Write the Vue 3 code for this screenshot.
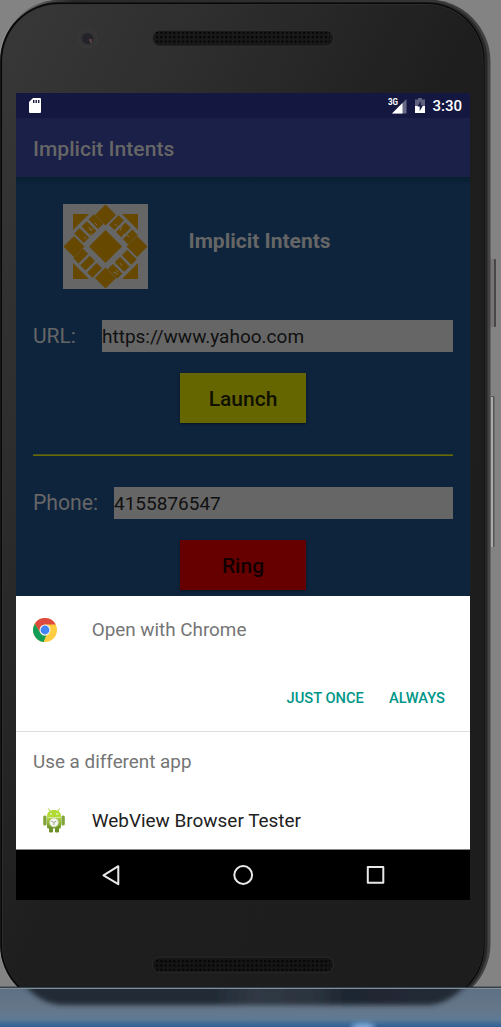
<script setup>
const tiles = [
  [16.6, 24.2], [23.8, 17.2], [30.9, 10.3],
]
</script>

<template>
  <main class="desktop">
    <svg class="hardware" viewBox="0 0 501 1027" aria-hidden="true">
      <defs>
        <linearGradient id="body" x1="0" y1="0" x2="1" y2="1">
          <stop offset="0" stop-color="#383838" />
          <stop offset=".22" stop-color="#2e2e2e" />
          <stop offset=".5" stop-color="#1e1e1e" />
          <stop offset="1" stop-color="#1d1d1e" />
        </linearGradient>
        <linearGradient id="rim" x1="0" y1="0" x2="1" y2="0">
          <stop offset="0" stop-color="#999" />
          <stop offset=".05" stop-color="#6e6e6e" />
          <stop offset=".15" stop-color="#282828" />
          <stop offset=".85" stop-color="#333" />
          <stop offset="1" stop-color="#454344" />
        </linearGradient>
        <linearGradient id="dock" x1="0" y1="0" x2="0" y2="1">
          <stop offset="0" stop-color="#5d7085" />
          <stop offset=".5" stop-color="#657688" />
          <stop offset=".8" stop-color="#5f7a94" />
          <stop offset="1" stop-color="#2d6096" />
        </linearGradient>
        <linearGradient id="reflection" x1="0" y1="0" x2="1" y2="0">
          <stop offset="0" stop-color="#202a35" />
          <stop offset=".42" stop-color="#212a35" />
          <stop offset=".52" stop-color="#303944" />
          <stop offset=".65" stop-color="#2b343f" />
          <stop offset=".72" stop-color="#1f2732" />
          <stop offset="1" stop-color="#222a36" />
        </linearGradient>
        <pattern id="holes" x="155" y="0" width="4.33" height="4.4" patternUnits="userSpaceOnUse">
          <rect width="2" height="2" x="1" y="1" fill="#020202" />
        </pattern>
        <filter id="soft" x="-10%" y="-50%" width="120%" height="200%">
          <feGaussianBlur stdDeviation="2.6" />
        </filter>
        <clipPath id="above"><rect width="501" height="987" /></clipPath>
        <clipPath id="below"><rect y="989" width="501" height="38" /></clipPath>
      </defs>
      <rect width="501" height="1027" fill="#838383" />
      <g clip-path="url(#above)">
        <rect x="490" y="259" width="6" height="68" rx="1" fill="#484648" />
        <rect x="490" y="259" width="4" height="68" fill="#777576" />
        <rect x="491" y="396" width="3.5" height="151" rx="1" fill="#555" />
        <rect x="491" y="397" width="2" height="150" fill="#aaa" />
        <rect x="-1" y="-.5" width="491.5" height="1006" rx="62" fill="url(#rim)" />
        <rect x="0" y="2" width="487.5" height="1002" rx="59" fill="#272728" />
        <rect x=".5" y="2.5" width="484" height="1001" rx="58" fill="#080808" />
        <rect x="2" y="4" width="481.5" height="998" rx="57" fill="#303030" />
        <rect x="2.7" y="4.7" width="480.3" height="997" rx="56" fill="url(#body)" />
      </g>
      <circle cx="87.5" cy="38.5" r="9.5" fill="#343434" stroke="#3c3939" />
      <circle cx="87.7" cy="38.5" r="5.5" fill="#242329" />
      <path d="M89 40h3M90 42h2" stroke="#8a5960" stroke-width="1" />
      <rect x="152.5" y="30.5" width="181" height="15.5" rx="7.7" fill="#191919" stroke="#303030" stroke-width=".7" />
      <rect x="156" y="31.7" width="174" height="13" fill="url(#holes)" />
      <rect x="152.5" y="957.2" width="181" height="15" rx="7.5" fill="#151515" stroke="#303030" stroke-width=".7" />
      <rect x="156" y="958.4" width="174" height="13" fill="url(#holes)" />
      <rect y="987" width="501" height="40" fill="url(#dock)" />
      <g clip-path="url(#below)">
        <path d="M21 980H470Q451 1005 426 1005H65Q38 1005 21 980Z" fill="url(#reflection)" filter="url(#soft)" />
        <ellipse cx="363" cy="1027" rx="12" ry="4" fill="#82addc" filter="url(#soft)" />
      </g>
      <path d="M0 987.2H501" stroke="#151e27" stroke-width="1" />
      <path d="M0 988.4H501" stroke="#87939b" stroke-width="1" />
    </svg>

    <section class="screen">
      <header class="status">
        <svg class="sd" viewBox="0 0 12 15"><path d="M4 0H11Q12 0 12 1V14Q12 15 11 15H1Q0 15 0 14V4Z" fill="#fff" /><path d="M4.700 2V5M7.200 2V5M9.700 2V5" stroke="#16193f" stroke-width="1.400" /></svg>
        <svg class="signal" viewBox="0 0 19 16">
          <path d="M18.500 1V15.500H4Z" fill="#686a86" /><path d="M14.500 5V15.500H4Z" fill="#fff" />
          <text x="0" y="7" fill="#fff" font-size="8.200" font-weight="700" textLength="10" lengthAdjust="spacingAndGlyphs">3G</text>
        </svg>
        <svg class="battery" viewBox="0 0 10 15"><path d="M3 0H7V1.500H10V8H0V1.500H3Z" fill="#5f617d" /><path d="M0 8H10V15H0Z" fill="#fff" /><path d="M5.700 3 2.500 8.600H4.700V13L8 7.400H5.700Z" fill="#16193f" /></svg>
        <span class="clock">3:30</span>
      </header>
      <div class="appbar"><span class="apptitle">Implicit Intents</span></div>

      <div class="content">
        <div class="hero">
          <svg class="logo" viewBox="0 0 85 85">
            <rect width="85" height="85" fill="#666" />
            <g fill="#664800">
              <path d="M42.500 26 59 42.500 42.500 59 26 42.500Z" />
              <path d="M42.500 .5 53 11 42.500 21.500 32 11Z M42.500 63.500 53 74 42.500 84.500 32 74Z M.5 42.500 11 32 21.500 42.500 11 53Z M63.500 42.500 74 32 84.500 42.500 74 53Z" />
              <path d="M10 10H26L10 26Z M59 10H75V26Z M10 59V75H26Z M75 59V75H59Z" />
              <g v-for="angle in [0, 90, 180, 270]" :key="angle" :transform="`rotate(${angle} 42.5 42.5)`">
                <path v-for="([x, y], i) in tiles" :key="i" :d="`M${x} ${y}l9.500 9.500-5.300 5.300-9.500-9.500Z`" />
              </g>
            </g>
            <path d="m26 23 2 4 2-3m-3 5 2 2m3-12 2 2m-13 12 2 2M52 20l2 2m5 0-2 5m4 3-1 3m4-2 2 2M50 68l5 2m2-11 2 3m-6 4 2 2" fill="none" stroke="#777166" stroke-width=".8" />
          </svg>
          <span class="herotitle">Implicit Intents</span>
        </div>
        <div class="field url"><span class="label"><span>URL:</span></span><span class="input"><span class="val1">https://www.yahoo.com</span></span></div>
        <div class="button launch"><span>Launch</span></div>
        <div class="rule"></div>
        <div class="field phone"><span class="label"><span>Phone:</span></span><span class="input"><span class="val2">4155876547</span></span></div>
        <div class="button ring"><span>Ring</span></div>
      </div>

      <div class="sheet">
        <div class="row chrome">
          <svg class="chromeicon" viewBox="0 0 24 24">
            <circle cx="12" cy="12" r="12" fill="#ffcd40" />
            <path d="M12 6.500H22.700A12 12 0 0 0 1.800 5.700L7.200 14.700Z" fill="#dd4b3e" />
            <path d="M1.800 5.700 7.200 14.700A5.500 5.500 0 0 0 13.500 17.300L10.800 24A12 12 0 0 1 1.800 5.700Z" fill="#109d58" />
            <path d="m16.700 14.700-4.800 9.200H10.700L13.500 17Z" fill="#ffcd40" />
            <circle cx="12" cy="12" r="5.500" fill="#f4f4f4" /><circle cx="12" cy="12" r="4.400" fill="#4285f4" />
          </svg>
          <span class="opentext">Open with Chrome</span>
        </div>
        <div class="actions"><span class="once">JUST ONCE</span><span class="always">ALWAYS</span></div>
        <div class="different"><span>Use a different app</span></div>
        <div class="row webview">
          <svg class="android" viewBox="0 0 22 25">
            <defs><linearGradient id="green" x2="0" y2="1"><stop stop-color="#add43c" /><stop offset="1" stop-color="#70942a" /></linearGradient></defs>
            <path d="M7 3 5.500.5M15 3 16.500.5" stroke="#a5c83c" />
            <path d="M4 9C4 4 6.500 2 11 2s7 2 7 7Z" fill="#b0db35" />
            <path d="M4 9.500H18V19Q18 20.500 16.500 20.500H5.500Q4 20.500 4 19Z" fill="url(#green)" />
            <rect x=".2" y="7.500" width="3.400" height="10" rx="1.500" fill="#82a43a" /><rect x="18.400" y="7.500" width="3.400" height="10" rx="1.500" fill="#82a43a" />
            <rect x="6" y="19.500" width="4" height="5" rx="1.300" fill="#6d922a" /><rect x="12" y="19.500" width="4" height="5" rx="1.300" fill="#6d922a" />
            <circle cx="8" cy="6" r=".8" fill="#fff" /><circle cx="14" cy="6" r=".8" fill="#fff" />
            <circle cx="11" cy="14.500" r="4.500" fill="#f5f6ed" stroke="#b6c296" stroke-width=".6" />
            <path d="m8.300 13 2.700 1.500 2.300-1.500M11 14.500V17" fill="none" stroke="#91998b" stroke-width=".9" />
          </svg>
          <span class="webtext">WebView Browser Tester</span>
        </div>
      </div>

      <nav class="nav">
        <svg viewBox="0 0 454 50" fill="none" stroke="#e8e8e8" stroke-width="2" stroke-linejoin="round">
          <path d="M87.500 25.300 102.300 16.200V34.200Z" /><circle cx="227.200" cy="25" r="8.900" /><rect x="351.800" y="17.100" width="15.500" height="15.700" />
        </svg>
      </nav>
    </section>
  </main>
</template>

<style>
html, body { margin: 0; overflow: hidden; }
</style>

<style scoped>
.desktop { position: relative; box-sizing: border-box; width: 501px; height: 1027px; padding: 93px 31px 0 16px; font-family: Roboto, "Liberation Sans", sans-serif; overflow: hidden; }
.hardware { position: absolute; inset: 0; width: 501px; height: 1027px; }
.screen { position: relative; width: 454px; height: 807px; display: flex; flex-direction: column; background: #0e243d; overflow: hidden; }
svg { display: block; flex-shrink: 0; }
span { white-space: nowrap; }
.status { display: flex; height: 25px; background: #141840; color: #fff; padding-left: 13px; box-sizing: border-box; }
.sd { width: 12px; height: 15px; margin-top: 5px; }
.signal { width: 19px; height: 16px; margin: 4.500px 0 0 346.500px; }
.battery { width: 10px; height: 15px; margin: 5px 0 0 8.500px; }
.clock { margin-left: 7.500px; font-size: 15px; font-weight: 500; line-height: 26px; }
.appbar { height: 59px; flex-shrink: 0; background: #1a2047; color: #666; font-size: 21.100px; font-weight: 500; line-height: 62px; padding-left: 17px; }
.content { height: 419px; flex-shrink: 0; padding: 27px 17px 0; box-sizing: border-box; background: linear-gradient(#091e30, #0e243d 8px); color: #666; }
.hero { display: flex; height: 85px; padding-left: 30px; }
.logo { width: 85px; height: 85px; }
.herotitle { margin-left: 40.500px; font-size: 21px; font-weight: 700; line-height: 74px; }
.field { display: flex; height: 32px; }
.label { font-size: 21px; line-height: 32px; }
.input { flex: 1; background: #666; color: #101010; font-size: 19px; line-height: 34px; }
.url { margin-top: 31px; }
.url .label { width: 69px; }
.phone { margin-top: 31px; }
.phone .label { width: 81px; font-size: 21.200px; }
.button { display: flex; justify-content: center; width: 126px; height: 50px; margin: 21px auto 0; color: #101000; font-size: 21px; font-weight: 500; line-height: 52px; box-shadow: 0 1px 2px #071525; }
.launch { background: #666600; }
.ring { background: #660000; color: #100000; }
.rule { height: 1px; margin-top: 31px; background: #686a00; border-top: 1px solid #46521c; }
.sheet { height: 254px; flex-shrink: 0; background: #fff; box-sizing: border-box; border-bottom: 1px solid #888; }
.row { display: flex; align-items: center; }
.chrome { height: 68px; padding-left: 17px; color: #757575; font-size: 18.850px; }
.chromeicon { width: 24px; height: 24px; }
.opentext { margin-left: 34.700px; }
.actions { display: flex; justify-content: flex-end; gap: 25px; height: 68px; box-sizing: border-box; padding-right: 25px; border-bottom: 1px solid #ddd; color: #009688; font-size: 14.700px; font-weight: 500; line-height: 68px; }
.different { height: 59px; padding-left: 17px; color: #757575; font-size: 18.850px; line-height: 61px; }
.webview { height: 58px; padding-left: 27px; color: #212121; font-size: 18.950px; }
.android { width: 22px; height: 25px; }
.webtext { margin-left: 26.700px; }
.nav { height: 50px; background: #000; }
.nav svg { width: 454px; height: 50px; }
</style>
